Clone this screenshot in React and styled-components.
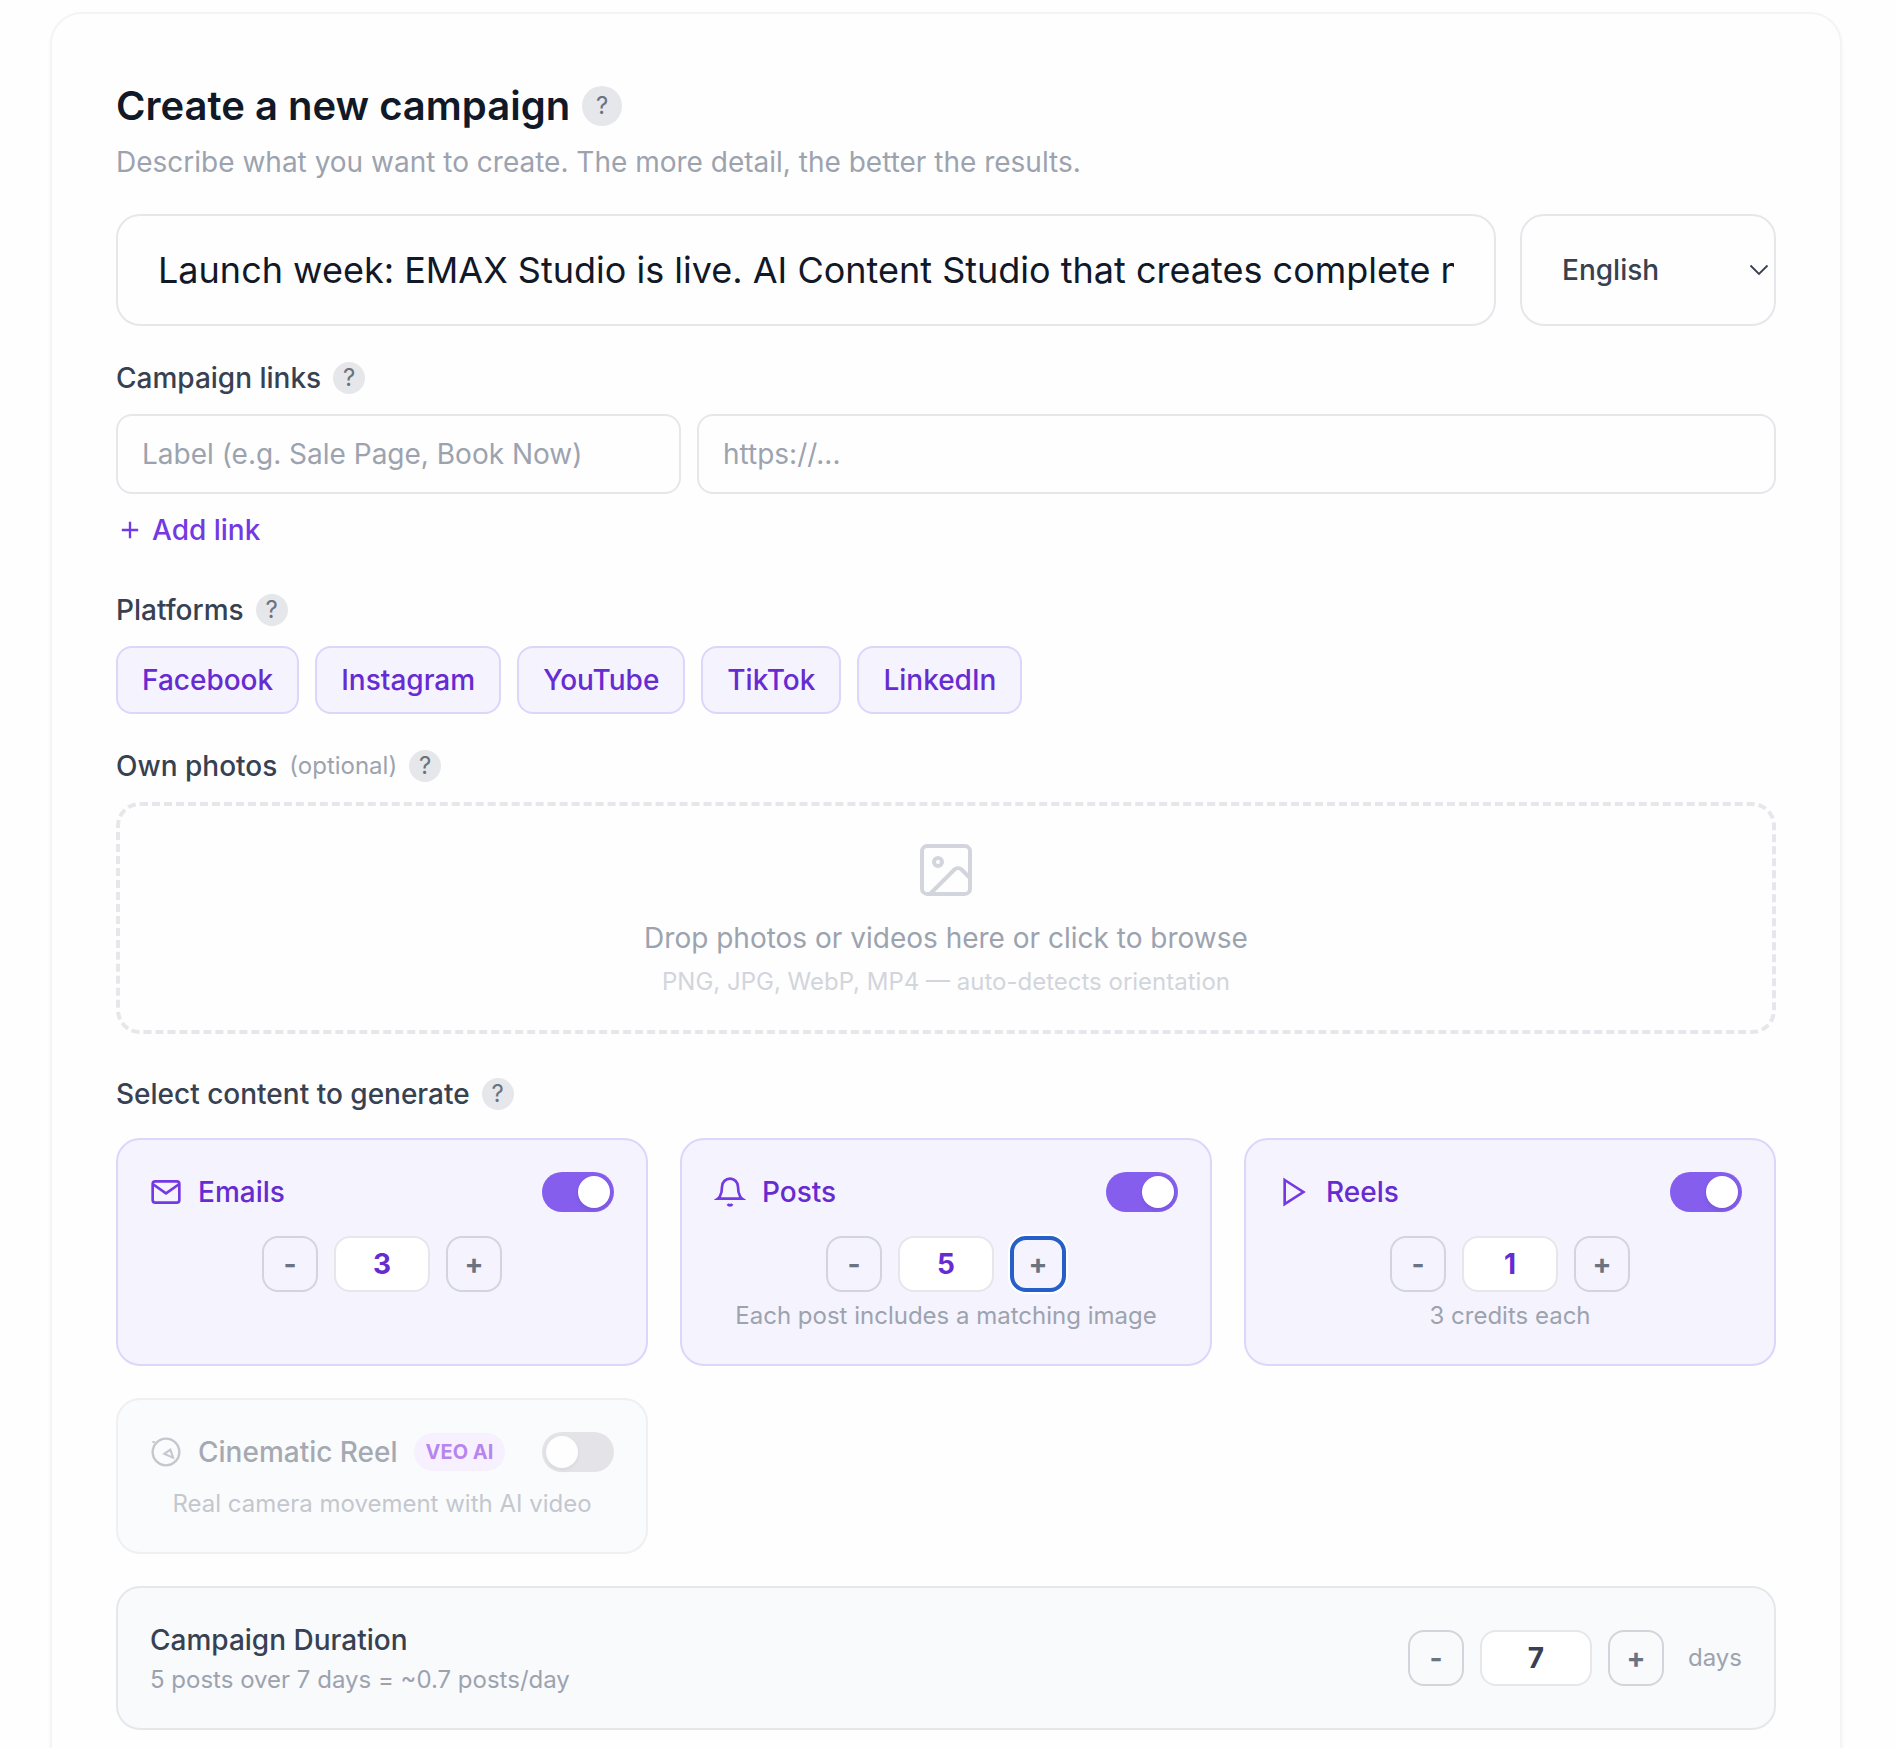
import React, { useState } from "react";
import styled, { createGlobalStyle } from "styled-components";

const GlobalStyle = createGlobalStyle`
  * {
    box-sizing: border-box;
  }
  body {
    margin: 0;
    background: #fefefe;
    font-family: Inter, sans-serif;
    font-size: 28px;
    line-height: 40px;
    color: #374151;
  }
  button, input {
    font: inherit;
    margin: 0;
  }
`;

const Page = styled.main`
  height: 1748px;
  padding: 12px 54px 0 50px;
  overflow: hidden;
`;

const Panel = styled.section`
  display: flex;
  flex-direction: column;
  min-height: 1840px;
  padding: 64px;
  border: 2px solid #f3f4f6;
  border-radius: 32px;
  background: #fefefe;
  box-shadow: 0 2px 4px rgba(0, 0, 0, 0.03);
`;

const TitleRow = styled.div`
  display: flex;
  align-items: center;
  gap: 12px;
`;

const Title = styled.h1`
  margin: 0;
  font-size: 40px;
  line-height: 56px;
  font-weight: 600;
  color: #111827;
`;

const Help = styled.span`
  display: flex;
  align-items: center;
  justify-content: center;
  width: ${({ $large }) => ($large ? 40 : 32)}px;
  height: ${({ $large }) => ($large ? 40 : 32)}px;
  border-radius: 50%;
  background: #e5e7eb;
  color: #6b7280;
  font-size: 24px;
  line-height: 32px;
  font-weight: 400;
`;

const Intro = styled.p`
  margin: 8px 0 32px;
  color: #9ca3af;
`;

const PromptRow = styled.div`
  display: grid;
  grid-template-columns: 1fr 256px;
  gap: 24px;
`;

const PromptInput = styled.input`
  width: 100%;
  height: 112px;
  padding: 0 40px;
  border: 2px solid #e5e7eb;
  border-radius: 24px;
  background: #fefefe;
  color: #111827;
  font-size: 36px;
  outline: none;
`;

const LanguageSelect = styled.div`
  display: flex;
  align-items: center;
  justify-content: space-between;
  height: 112px;
  padding: 0 5px 0 40px;
  border: 2px solid #e5e7eb;
  border-radius: 24px;
  font-weight: 500;
`;

const Label = styled.div`
  display: flex;
  align-items: center;
  gap: 12px;
  margin-top: ${({ $top }) => $top || 32}px;
  margin-bottom: ${({ $bottom }) => $bottom || 16}px;
  font-weight: 500;
`;

const Optional = styled.span`
  font-size: 24px;
  font-weight: 400;
  color: #9ca3af;
`;

const LinkRow = styled.div`
  display: grid;
  grid-template-columns: 565px 1fr;
  gap: 16px;
`;

const LinkInput = styled.input`
  width: 100%;
  height: 80px;
  padding: 0 24px;
  border: 2px solid #e5e7eb;
  border-radius: 16px;
  background: #fefefe;
  outline: none;

  &::placeholder {
    color: #9ca3af;
    opacity: 1;
  }
`;

const AddLink = styled.button`
  display: flex;
  align-items: center;
  align-self: flex-start;
  gap: 8px;
  margin-top: 16px;
  padding: 0;
  border: 0;
  background: none;
  color: #7339e3;
  font-weight: 500;
`;

const Chips = styled.div`
  display: flex;
  gap: 16px;
`;

const Chip = styled.button`
  height: 68px;
  padding: 0 24px;
  border: 2px solid #dcd6fb;
  border-radius: 16px;
  background: #f5f3fe;
  color: #662bd1;
  font-weight: 500;
`;

const DropZone = styled.div`
  display: flex;
  flex-direction: column;
  align-items: center;
  height: 232px;
  padding-top: 32px;
  border: 4px dashed #e5e7eb;
  border-radius: 24px;
  color: #d2d5dc;
`;

const DropText = styled.div`
  margin-top: 16px;
  color: #9ca3af;
`;

const DropHint = styled.div`
  margin-top: 8px;
  font-size: 24px;
  line-height: 32px;
`;

const ContentGrid = styled.div`
  display: grid;
  grid-template-columns: repeat(3, 1fr);
  gap: 32px;
`;

const ContentCard = styled.div`
  padding: 32px;
  border: 2px solid ${({ $on }) => ($on ? "#dcd6fb" : "#e5e7eb")};
  border-radius: 24px;
  background: ${({ $on }) => ($on ? "#f5f3fe" : "#f9fafc")};
  opacity: ${({ $on }) => ($on ? 1 : 0.6)};
`;

const CardHeader = styled.div`
  display: flex;
  align-items: center;
  gap: 16px;
  color: ${({ $on }) => ($on ? "#7339e3" : "#9ca3af")};
`;

const CardTitle = styled.span`
  font-weight: 500;
  color: ${({ $on }) => ($on ? "#662bd1" : "#6b7280")};
`;

const Tag = styled.span`
  padding: 4px 12px;
  border-radius: 19px;
  background: #f3e8ff;
  color: #8a36e6;
  font-size: 20px;
  line-height: 30px;
  font-weight: 700;
`;

const Switch = styled.button`
  display: flex;
  justify-content: ${({ $on }) => ($on ? "flex-end" : "flex-start")};
  width: 72px;
  height: 40px;
  margin-left: auto;
  padding: 4px;
  border: 0;
  border-radius: 20px;
  background: ${({ $on }) => ($on ? "#855eee" : "#d3d4da")};
`;

const Knob = styled.span`
  width: 32px;
  height: 32px;
  border-radius: 50%;
  background: #fff;
  box-shadow: 0 2px 4px rgba(0, 0, 0, 0.1);
`;

const Stepper = styled.div`
  display: flex;
  align-items: center;
  justify-content: center;
  gap: 16px;
  margin-top: ${({ $top }) => $top || 0}px;
`;

const StepButton = styled.button`
  display: flex;
  align-items: center;
  justify-content: center;
  width: 56px;
  height: 56px;
  padding: 0;
  border: ${({ $focused }) => ($focused ? "4px solid #265fc8" : "2px solid #d2d5dc")};
  border-radius: 16px;
  background: none;
  box-shadow: ${({ $focused }) => ($focused ? "0 0 0 2px #fff" : "none")};
  color: #6b7280;
  font-size: 28px;
  font-weight: 700;
`;

const StepInput = styled.input`
  width: ${({ $wide }) => ($wide ? 112 : 96)}px;
  height: 56px;
  padding: 0;
  border: 2px solid #e5e7eb;
  border-radius: 16px;
  background: #fff;
  color: ${({ $wide }) => ($wide ? "#374151" : "#662bd1")};
  font-weight: 700;
  text-align: center;
  outline: none;
`;

const Note = styled.p`
  margin: ${({ $top }) => $top}px 0 0;
  font-size: 24px;
  line-height: 32px;
  color: #9ca3af;
  text-align: center;
`;

const Duration = styled.div`
  display: flex;
  align-items: center;
  justify-content: space-between;
  margin-top: 32px;
  padding: 32px;
  border: 2px solid #e5e7eb;
  border-radius: 24px;
  background: #f9fafc;
`;

const DurationTitle = styled.div`
  font-weight: 500;
`;

const DurationNote = styled.div`
  margin-top: 4px;
  font-size: 24px;
  line-height: 32px;
  color: #9ca3af;
`;

const Days = styled.span`
  margin-left: 8px;
  font-size: 24px;
  line-height: 32px;
  color: #9ca3af;
`;

const Icon = ({ size = 32, stroke = 2, children }) => (
  <svg
    width={size}
    height={size}
    viewBox="0 0 24 24"
    fill="none"
    stroke="currentColor"
    strokeWidth={stroke}
  >
    {children}
  </svg>
);

const icons = {
  emails: (
    <>
      <path d="M4 4h16c1.1 0 2 .9 2 2v12c0 1.1-.9 2-2 2H4c-1.1 0-2-.9-2-2V6c0-1.1.9-2 2-2z" />
      <path d="M22 6l-10 7L2 6" strokeLinejoin="round" />
    </>
  ),
  posts: (
    <>
      <path d="M18 8A6 6 0 0 0 6 8c0 7-3 9-3 9h18s-3-2-3-9" />
      <path d="M13.73 21a2 2 0 0 1-3.46 0" />
    </>
  ),
  reels: <path d="M5 3l14 9-14 9V3z" />,
  cinematic: (
    <>
      <circle cx="12" cy="12" r="10" strokeWidth="1.8" />
      <path d="M15.3 10.2l2 6-6.6-2.8z" strokeWidth="1.5" />
      <path d="M1.8 4.5h1.8" strokeWidth="1.4" />
    </>
  ),
};

const contentTypes = [
  { id: "emails", name: "Emails", count: 3, on: true },
  { id: "posts", name: "Posts", count: 5, on: true, note: "Each post includes a matching image", focused: true },
  { id: "reels", name: "Reels", count: 1, on: true, note: "3 credits each" },
  { id: "cinematic", name: "Cinematic Reel", tag: "VEO AI", on: false, note: "Real camera movement with AI video" },
];

const platforms = ["Facebook", "Instagram", "YouTube", "TikTok", "LinkedIn"];

const Counter = ({ value, wide, focused, top, children }) => {
  const [count, setCount] = useState(value);

  return (
    <Stepper $top={top}>
      <StepButton onClick={() => setCount(count - 1)}>-</StepButton>
      <StepInput $wide={wide} value={count} onChange={(e) => setCount(Number(e.target.value))} />
      <StepButton $focused={focused} onClick={() => setCount(count + 1)}>+</StepButton>
      {children}
    </Stepper>
  );
};

const ContentType = ({ item }) => {
  const { id, name, count, on, note, tag, focused } = item;

  return (
    <ContentCard $on={on}>
      <CardHeader $on={on}>
        <Icon>{icons[id]}</Icon>
        <CardTitle $on={on}>{name}</CardTitle>
        {tag && <Tag>{tag}</Tag>}
        <Switch $on={on}>
          <Knob />
        </Switch>
      </CardHeader>
      {on && <Counter value={count} focused={focused} top={24} />}
      {note && <Note $top={on ? 8 : 16}>{note}</Note>}
    </ContentCard>
  );
};

const App = () => {
  const [prompt, setPrompt] = useState(
    "Launch week: EMAX Studio is live. AI Content Studio that creates complete marketing campaigns"
  );

  return (
    <>
      <GlobalStyle />
      <Page>
        <Panel>
          <TitleRow>
            <Title>Create a new campaign</Title>
            <Help $large>?</Help>
          </TitleRow>
          <Intro>Describe what you want to create. The more detail, the better the results.</Intro>

          <PromptRow>
            <PromptInput value={prompt} onChange={(e) => setPrompt(e.target.value)} />
            <LanguageSelect>
              English
              <svg width="20" height="12" viewBox="0 0 20 12" fill="none" stroke="currentColor" strokeWidth="1.8">
                <path d="M1.5 1.5l8.5 8.5 8.5-8.5" />
              </svg>
            </LanguageSelect>
          </PromptRow>

          <Label>
            Campaign links <Help>?</Help>
          </Label>
          <LinkRow>
            <LinkInput placeholder="Label (e.g. Sale Page, Book Now)" />
            <LinkInput placeholder="https://..." />
          </LinkRow>
          <AddLink>
            <Icon size={28}>
              <path d="M12 5v14M5 12h14" />
            </Icon>
            Add link
          </AddLink>

          <Label $top={40}>
            Platforms <Help>?</Help>
          </Label>
          <Chips>
            {platforms.map((platform) => (
              <Chip key={platform}>{platform}</Chip>
            ))}
          </Chips>

          <Label>
            Own photos <Optional>(optional)</Optional> <Help>?</Help>
          </Label>
          <DropZone>
            <Icon size={64} stroke={1.5}>
              <rect x="3" y="3" width="18" height="18" rx="2" />
              <circle cx="9" cy="9" r="1.5" />
              <path d="m21 15-3.086-3.086a2 2 0 0 0-2.828 0L6 21" />
            </Icon>
            <DropText>Drop photos or videos here or click to browse</DropText>
            <DropHint>PNG, JPG, WebP, MP4 — auto-detects orientation</DropHint>
          </DropZone>

          <Label $top={40} $bottom={24}>
            Select content to generate <Help>?</Help>
          </Label>
          <ContentGrid>
            {contentTypes.map((item) => (
              <ContentType key={item.id} item={item} />
            ))}
          </ContentGrid>

          <Duration>
            <div>
              <DurationTitle>Campaign Duration</DurationTitle>
              <DurationNote>5 posts over 7 days = ~0.7 posts/day</DurationNote>
            </div>
            <Counter value={7} wide>
              <Days>days</Days>
            </Counter>
          </Duration>
        </Panel>
      </Page>
    </>
  );
};

export default App;
